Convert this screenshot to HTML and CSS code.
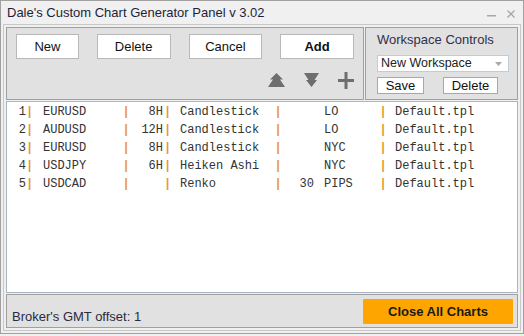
FILE: index.html
```html
<!DOCTYPE html>
<html lang="en">

<head>
  <meta charset="UTF-8">
  <title>Dale's Custom Chart Generator Panel</title>
  <link rel="stylesheet" href="styles.css">
</head>

<body>
  <div class="window">
    <div class="titlebar">
      <span class="title">Dale's Custom Chart Generator Panel v 3.02</span>
      <div class="win-ctrls">
        <svg width="10" height="10" viewBox="0 0 10 10"><rect x="0" y="6" width="9" height="1.5" fill="#a8a8a8"/></svg>
        <svg width="8" height="8" viewBox="0 0 8 8"><path d="M0.5 0.5 L7.5 7.5 M7.5 0.5 L0.5 7.5" stroke="#a8a8a8" stroke-width="1.3"/></svg>
      </div>
    </div>

    <div class="frame">
      <div class="top">
        <!-- chart controls -->
        <div class="panel tools">
          <div class="btn-row">
            <button class="btn btn-new">New</button>
            <button class="btn">Delete</button>
            <button class="btn">Cancel</button>
            <button class="btn btn-add">Add</button>
          </div>
          <div class="icon-row">
            <svg class="ico" width="17" height="14" viewBox="0 0 17 14"><polygon points="8.5,0 15,6.5 12,6.5 17,14 0,14 5,6.5 2,6.5"/></svg>
            <svg class="ico" width="15" height="14" viewBox="0 0 15 14"><polygon points="0,0 15,0 10.5,7 13,7 7.5,14 2,7 4.5,7"/></svg>
            <svg class="ico" width="16" height="17" viewBox="0 0 16 17"><rect x="0" y="7" width="16" height="3"/><rect x="6.5" y="0" width="3" height="17"/></svg>
          </div>
        </div>

        <!-- workspace controls -->
        <div class="panel ws">
          <div class="ws-title">Workspace Controls</div>
          <div class="dropdown">
            <span>New Workspace</span>
            <svg width="7" height="4" viewBox="0 0 7 4"><polygon points="0,0 7,0 3.5,4" fill="#a8a8a8"/></svg>
          </div>
          <div class="ws-btns">
            <button class="sbtn sbtn-save">Save</button>
            <button class="sbtn sbtn-del">Delete</button>
          </div>
        </div>
      </div>

      <div class="list">
        <div class="row"><span class="c num">1</span><span class="c bar b1">|</span><span class="c sym">EURUSD</span><span class="c bar">|</span><span class="c tf">8H</span><span class="c bar b3">|</span><span class="c type">Candlestick</span><span class="c bar">|</span><span class="c box"></span><span class="c ses">LO</span><span class="c bar">|</span><span class="c tpl">Default.tpl</span></div>
        <div class="row"><span class="c num">2</span><span class="c bar b1">|</span><span class="c sym">AUDUSD</span><span class="c bar">|</span><span class="c tf">12H</span><span class="c bar b3">|</span><span class="c type">Candlestick</span><span class="c bar">|</span><span class="c box"></span><span class="c ses">LO</span><span class="c bar">|</span><span class="c tpl">Default.tpl</span></div>
        <div class="row"><span class="c num">3</span><span class="c bar b1">|</span><span class="c sym">EURUSD</span><span class="c bar">|</span><span class="c tf">8H</span><span class="c bar b3">|</span><span class="c type">Candlestick</span><span class="c bar">|</span><span class="c box"></span><span class="c ses">NYC</span><span class="c bar">|</span><span class="c tpl">Default.tpl</span></div>
        <div class="row"><span class="c num">4</span><span class="c bar b1">|</span><span class="c sym">USDJPY</span><span class="c bar">|</span><span class="c tf">6H</span><span class="c bar b3">|</span><span class="c type">Heiken Ashi</span><span class="c bar">|</span><span class="c box"></span><span class="c ses">NYC</span><span class="c bar">|</span><span class="c tpl">Default.tpl</span></div>
        <div class="row"><span class="c num">5</span><span class="c bar b1">|</span><span class="c sym">USDCAD</span><span class="c bar">|</span><span class="c tf"></span><span class="c bar b3">|</span><span class="c type">Renko</span><span class="c bar">|</span><span class="c box">30</span><span class="c ses">PIPS</span><span class="c bar">|</span><span class="c tpl">Default.tpl</span></div>
      </div>

      <div class="panel bottom">
        <span class="gmt">Broker's GMT offset: 1</span>
        <button class="close-btn">Close All Charts</button>
      </div>
    </div>
  </div>
</body>

</html>
```

FILE: styles.css
```css
* {
  margin: 0;
  padding: 0;
  box-sizing: border-box;
}

body {
  background: #f0f0f0;
  font-family: "Liberation Sans", Arial, sans-serif;
  font-size: 13px;
  color: #222;
}

/* outer window */
.window {
  width: 524px;
  height: 334px;
  border: 1px solid #a0a0a0;
  background: #f0f0f0;
}

.titlebar {
  height: 23px;
  display: flex;
  align-items: center;
  justify-content: space-between;
  padding-left: 6px;
  padding-right: 8px;
}

.title {
  color: #1e1e38;
  line-height: 16px;
}

.win-ctrls {
  display: flex;
  align-items: center;
  gap: 10px;
  padding-top: 2px;
}

/* inner frame */
.frame {
  margin: 0 2px;
  height: 307px;
  border: 1px solid #c8c8c8;
  padding: 2px;
  display: flex;
  flex-direction: column;
  gap: 1px;
}

.top {
  display: flex;
  gap: 1px;
  height: 73px;
}

.panel {
  background: #e1e1e1;
  border: 1px solid #a0a0a0;
}

.tools {
  width: 358px;
  padding: 6px 9px;
}

.btn-row {
  display: flex;
  gap: 18px;
}

.btn {
  width: 74px;
  height: 25px;
  background: #fff;
  border: 1px solid #b8b8b8;
  font-family: inherit;
  font-size: 13px;
  color: #111;
}

.btn-new {
  width: 63px;
}

.btn-add {
  font-weight: bold;
}

.icon-row {
  display: flex;
  justify-content: flex-end;
  align-items: center;
  height: 18px;
  margin-top: 12px;
  gap: 19px;
}

.ico {
  fill: #6e6e6e;
}

/* workspace panel */
.ws {
  flex: 1;
  padding: 4px 0 0 11px;
}

.ws-title {
  line-height: 16px;
  color: #30304a;
}

.dropdown {
  margin-top: 7px;
  width: 132px;
  height: 17px;
  background: #fff;
  border: 1px solid #c0ccd8;
  display: flex;
  align-items: center;
  justify-content: space-between;
  padding: 0 6px 0 3px;
  font-size: 12.5px;
  line-height: 15px;
}

.ws-btns {
  display: flex;
  gap: 19px;
  margin-top: 5px;
}

.sbtn {
  height: 17px;
  background: #fff;
  border: 1px solid #a8a8a8;
  font-family: inherit;
  font-size: 13px;
  line-height: 15px;
  color: #111;
}

.sbtn-save {
  width: 47px;
}

.sbtn-del {
  width: 55px;
}

/* chart list */
.list {
  height: 192px;
  background: #fff;
  border: 1px solid #aab6c4;
  padding-top: 1px;
  font-family: "Liberation Mono", "Courier New", monospace;
  font-size: 12px;
  color: #333;
}

.row {
  display: flex;
  height: 18px;
  line-height: 18px;
}

.c {
  flex: none;
  white-space: pre;
}

.num { width: 19px; text-align: right; }
.sym { width: 89px; padding-left: 10px; }
.tf { width: 33px; text-align: right; }
.type { width: 102px; padding-left: 8px; }
.box { width: 32px; text-align: right; }
.ses { width: 65px; padding-left: 10px; }
.tpl { padding-left: 8px; }

.bar {
  width: 8px;
  text-align: center;
  font-weight: bold;
  color: #e8962e;
}

.b1 { width: 7px; }
.b3 { width: 9px; }

/* bottom bar */
.bottom {
  height: 34px;
  display: flex;
  justify-content: space-between;
}

.gmt {
  align-self: flex-end;
  padding: 0 0 2px 5px;
  line-height: 16px;
  color: #2a2a40;
}

.close-btn {
  margin: 4px 4px 0 0;
  width: 150px;
  height: 25px;
  background: #ffa500;
  border: none;
  border-radius: 1px;
  font-family: inherit;
  font-size: 13px;
  font-weight: bold;
  color: #1a1a1a;
}
```
